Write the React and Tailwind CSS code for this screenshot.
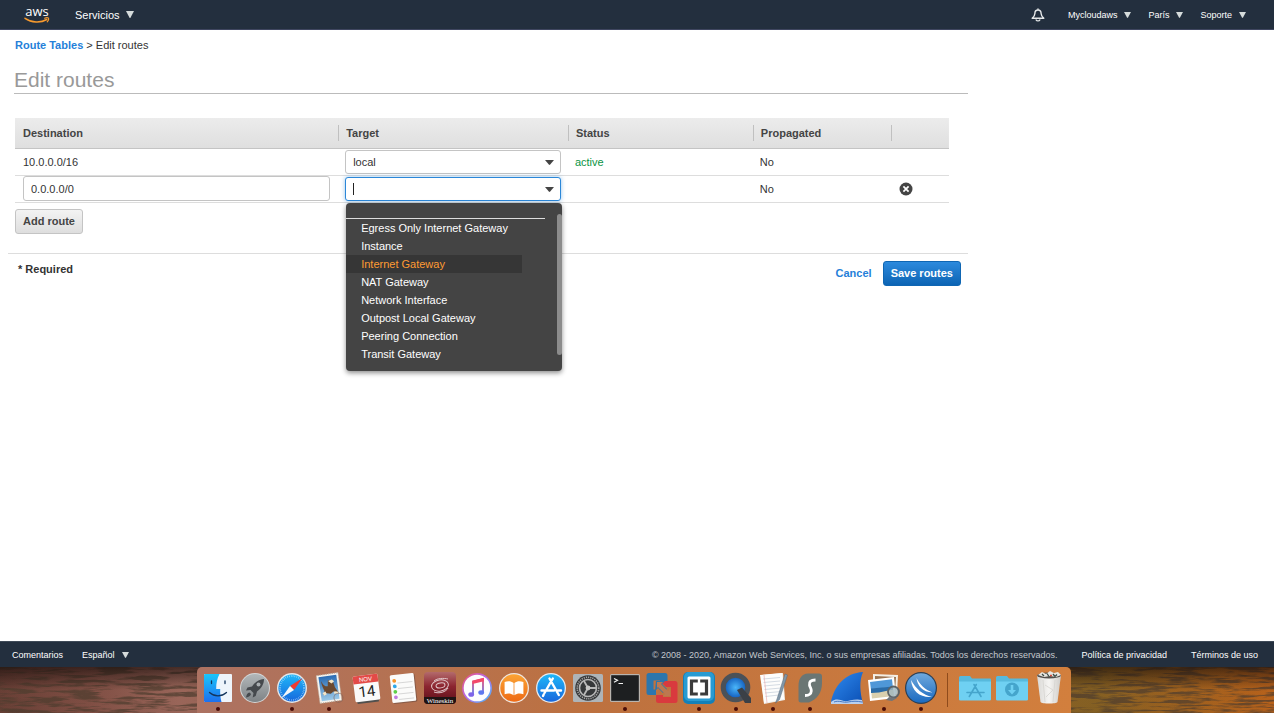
import { useState } from 'react';

const TARGETS = [
  'Egress Only Internet Gateway',
  'Instance',
  'Internet Gateway',
  'NAT Gateway',
  'Network Interface',
  'Outpost Local Gateway',
  'Peering Connection',
  'Transit Gateway',
];

function Caret({ className }) {
  return (
    <svg viewBox="0 0 8 7" preserveAspectRatio="none" className={className} fill="currentColor" aria-hidden="true">
      <path d="M0 0h8L4.6 6.4a.7.7 0 0 1-1.2 0z" />
    </svg>
  );
}

function AwsLogo() {
  return (
    <svg viewBox="0 0 26 18" className="h-[18px] w-[26px] overflow-visible" role="img" aria-label="AWS">
      <text x="13" y="10" textAnchor="middle" fill="#fff" fontFamily="Open Sans, sans-serif" fontWeight="400" fontSize="13">
        aws
      </text>
      <path d="M1 12.300c6.600 4.600 15.600 4.900 21.800 1.200" fill="none" stroke="#f79a2e" strokeWidth="1.500" strokeLinecap="round" />
      <path d="M20.600 12.200c1.600-.6 3.400-.5 3.900 0 .4.600-.2 2.400-1.300 3.700" fill="none" stroke="#f79a2e" strokeWidth="1.100" strokeLinecap="round" />
    </svg>
  );
}

function NavMenu({ label }) {
  return (
    <button type="button" className="flex items-center gap-[7px] text-[9px] text-white">
      {label}
      <Caret className="mt-px h-[6px] w-[7px] text-[#d5dbdb]" />
    </button>
  );
}

function Header() {
  return (
    <header className="flex h-[30px] items-center justify-between border-b border-[#3f4660] bg-[#232f3e] pr-7 pl-6">
      <div className="flex items-center gap-[25px]">
        <a href="#home">
          <AwsLogo />
        </a>
        <button type="button" className="flex items-center gap-[6px] text-[11px] text-white">
          Servicios
          <Caret className="h-[7px] w-2 text-[#d5dbdb]" />
        </button>
      </div>
      <div className="flex items-center gap-[17px]">
        <button type="button" aria-label="Notificaciones" className="mr-[6px]">
          <svg viewBox="0 0 14 14" className="h-[14px] w-[14px]" fill="none" stroke="#e6e9ea" strokeWidth="1.400" strokeLinejoin="round" strokeLinecap="round">
            <path d="M7 1v1M7 2C4.800 2 3.900 3.600 3.900 5.400 3.900 7.400 3 8.500 1.200 10.200h11.600C11 8.500 10.100 7.400 10.100 5.400 10.100 3.600 9.200 2 7 2zM5.200 12c.6 1.200 3 1.200 3.600 0" />
          </svg>
        </button>
        <NavMenu label="Mycloudaws" />
        <NavMenu label="París" />
        <NavMenu label="Soporte" />
      </div>
    </header>
  );
}

function HeadCell({ children, first }) {
  return (
    <th scope="col" className="border-b border-[#c4c4c4] p-0 text-left font-bold text-[#444]">
      <div className={first ? 'h-4 pl-2 leading-4' : 'h-4 border-l border-[#c0c0c0] pl-[7px] leading-4'}>
        {children}
      </div>
    </th>
  );
}

function TargetMenu({ selected, onSelect }) {
  return (
    <div className="absolute top-[26px] right-[-1px] left-[1px] z-10 h-[168px] overflow-hidden rounded-[4px] bg-[#444] pt-[15px] shadow-[0_2px_5px_rgba(0,0,0,0.45)]">
      <ul role="listbox" aria-label="Target" className="mr-[17px] border-t border-[#ddd]">
        {TARGETS.map((name) => (
          <li
            key={name}
            role="option"
            aria-selected={name === selected}
            onClick={() => onSelect(name)}
            className={
              name === selected
                ? 'mr-[23px] h-[18px] cursor-pointer bg-[#363636] pl-[15px] leading-[18px] text-[#ff9b33]'
                : 'mr-[23px] h-[18px] cursor-pointer pl-[15px] leading-[18px] text-white'
            }
          >
            {name}
          </li>
        ))}
      </ul>
      <div className="absolute top-[11px] right-0 h-[141px] w-[5px] rounded-full bg-[#8c8c8c]" />
    </div>
  );
}

function RoutesTable() {
  const [highlighted, setHighlighted] = useState('Internet Gateway');

  return (
    <table className="w-full table-fixed border-collapse">
      <colgroup>
        <col className="w-[34.6%]" />
        <col className="w-[24.6%]" />
        <col className="w-[19.8%]" />
        <col className="w-[14.8%]" />
        <col />
      </colgroup>
      <thead>
        <tr className="h-[30px] bg-linear-to-b from-[#ececec] to-[#dfdfdf]">
          <HeadCell first>Destination</HeadCell>
          <HeadCell>Target</HeadCell>
          <HeadCell>Status</HeadCell>
          <HeadCell>Propagated</HeadCell>
          <HeadCell />
        </tr>
      </thead>
      <tbody>
        <tr className="h-[27px] border-b border-[#ddd]">
          <td className="px-2 py-0">10.0.0.0/16</td>
          <td className="px-[7px] py-0">
            <div className="relative">
              <select
                aria-label="Target for 10.0.0.0/16"
                className="block h-6 w-full appearance-none rounded-[3px] border border-[#c4c4c4] bg-white px-[7px] text-[11px]"
              >
                <option>local</option>
              </select>
              <Caret className="pointer-events-none absolute top-[10px] right-[7px] h-[5px] w-[9px] text-[#444]" />
            </div>
          </td>
          <td className="px-[7px] py-0 text-[#0b9444]">active</td>
          <td className="px-[7px] py-0">No</td>
          <td />
        </tr>
        <tr className="h-[27px] border-b border-[#ddd]">
          <td className="px-2 py-0">
            <input
              aria-label="Destination"
              defaultValue="0.0.0.0/0"
              className="block h-[25px] w-full rounded-[3px] border border-[#c4c4c4] bg-white px-[7px] text-[11px]"
            />
          </td>
          <td className="px-[7px] py-0">
            <div className="relative">
              <input
                role="combobox"
                aria-label="Target"
                aria-expanded="true"
                className="block h-6 w-full rounded-[3px] border border-[#2b87d8] bg-white px-[7px] text-[11px] shadow-[0_0_4px_rgba(43,135,216,0.5)] outline-none"
              />
              <span className="pointer-events-none absolute top-[6px] left-2 h-3 w-px bg-[#222]" />
              <Caret className="pointer-events-none absolute top-[10px] right-[7px] h-[5px] w-[9px] text-[#444]" />
              <TargetMenu selected={highlighted} onSelect={setHighlighted} />
            </div>
          </td>
          <td />
          <td className="px-[7px] py-0">No</td>
          <td className="px-2 py-0">
            <button type="button" aria-label="Remove route" className="block">
              <svg viewBox="0 0 14 14" className="h-[14px] w-[14px]">
                <circle cx="7" cy="7" r="6.500" fill="#444" />
                <path d="M4.400 4.400l5.200 5.200M9.600 4.400L4.400 9.600" stroke="#fff" strokeWidth="1.700" />
              </svg>
            </button>
          </td>
        </tr>
      </tbody>
    </table>
  );
}

function Footer() {
  return (
    <footer className="flex h-[26px] items-center justify-between border-t border-[#3f4a57] bg-[#232f3e] pr-4 pl-3 text-[9px] text-white">
      <div className="flex items-center gap-[19px]">
        <a href="#feedback">Comentarios</a>
        <NavMenu label="Español" />
      </div>
      <div className="flex items-center gap-6">
        <span className="text-[#c3c8cd]">
          © 2008 - 2020, Amazon Web Services, Inc. o sus empresas afiliadas. Todos los derechos reservados.
        </span>
        <a href="#privacy">Política de privacidad</a>
        <a href="#terms">Términos de uso</a>
      </div>
    </footer>
  );
}

// Dock icons, each drawn on a 32x32 grid
const DOCK_APPS = [
  {
    name: 'Finder',
    running: true,
    art: (
      <>
        <rect x="2" y="2" width="28" height="28" rx="1" fill="#eef4fb" />
        <path d="M2 3a1 1 0 0 1 1-1h14.500c-2.500 5-3.300 9-3.300 15h4c-.2 5 .2 9 1.300 13H3a1 1 0 0 1-1-1z" fill="url(#finder)" />
        <path d="M9.500 9v2.500M23 9v2.500M7.500 20.500c5 4.500 12 4.500 17 0" stroke="#14355c" strokeWidth="1.300" fill="none" strokeLinecap="round" />
      </>
    ),
  },
  {
    name: 'Launchpad',
    art: (
      <>
        <circle cx="16" cy="16" r="15" fill="#d4d7d8" />
        <circle cx="16" cy="16" r="14" fill="url(#silver)" />
        <path d="M25 7c-5 .3-9 3-12 7.500l-4.500 1-1.500 3 4.500-.5 3 3-.8 4.500 3-1.500 1.300-4.500C22.500 16.500 25 12 25 7z" fill="#45494d" />
        <circle cx="19.500" cy="12.500" r="2" fill="#a8adb0" />
        <path d="M10.500 20.500c-2 .5-3 2-3.500 5 3-.5 4.500-1.500 5-3.500z" fill="#45494d" />
      </>
    ),
  },
  {
    name: 'Safari',
    running: true,
    art: (
      <>
        <circle cx="16" cy="16" r="15" fill="#e4e7ea" />
        <circle cx="16" cy="16" r="13.600" fill="url(#blue)" />
        <circle cx="16" cy="16" r="12" fill="none" stroke="#cdeafd" strokeWidth="1.600" strokeDasharray=".5 1.400" />
        <path d="M26.500 6L14 14l4 4z" fill="#f03a32" />
        <path d="M5.500 26L14 14l4 4z" fill="#f5f7f9" />
      </>
    ),
  },
  {
    name: 'Mail',
    running: true,
    art: (
      <g transform="rotate(-8 16 16)">
        <rect x="5" y="2" width="22" height="28" fill="#f5f3ee" />
        <rect x="5" y="2" width="22" height="28" fill="none" stroke="#b9a898" strokeWidth="1" strokeDasharray="1 1" />
        <rect x="7" y="4" width="18" height="24" fill="url(#sky)" />
        <path d="M9 8c2 5 3 6 6 6l1-6 5 3 1 5 3 6-5-2-3 2-4-1-4 1c2-2 2-3 2-4-1-3-2-6-2-10z" fill="#6b4930" />
        <path d="M16 9l4-1 2 2-3 2zM9 20l3-1 1 3-3 1zM21 20l4 1-1 2-4-1z" fill="#f4e6c8" />
        <circle cx="24" cy="27" r="4.500" fill="none" stroke="#7e6158" strokeOpacity=".6" />
      </g>
    ),
  },
  {
    name: 'Calendar',
    art: (
      <g transform="rotate(-7 16 16)">
        <path d="M5 28h23l-1 3H6z" fill="#51504e" />
        <rect x="4" y="3" width="25" height="26" rx="1.500" fill="#fafafa" />
        <path d="M4 11V4.500A1.500 1.500 0 0 1 5.500 3h22A1.500 1.500 0 0 1 29 4.500V11z" fill="#e34a47" />
        <text x="16.500" y="9.300" textAnchor="middle" fontSize="6" fill="#fff" fontFamily="Liberation Sans, sans-serif">NOV</text>
        <text x="16.500" y="24.500" textAnchor="middle" fontSize="15" fill="#222" fontFamily="Roboto, sans-serif">14</text>
      </g>
    ),
  },
  {
    name: 'Reminders',
    art: (
      <g transform="rotate(-6 16 16)">
        <rect x="5" y="3" width="24" height="28" rx="1.500" fill="#5b4640" fillOpacity=".5" />
        <rect x="4" y="2" width="24" height="28" rx="1.500" fill="#fbfbfa" />
        <path d="M11 10.500h15M11 16h15M11 21.500h15M11 27h15" stroke="#cfcfcf" strokeWidth=".8" />
        <circle cx="8" cy="8" r="1.900" fill="#f8942c" />
        <circle cx="8" cy="13.500" r="1.900" fill="#2ea7ea" />
        <circle cx="8" cy="19" r="1.900" fill="#5fcf4a" />
        <circle cx="8" cy="24.500" r="1.900" fill="#c07be0" />
      </g>
    ),
  },
  {
    name: 'Wineskin app',
    art: (
      <>
        <rect x="0" y="0" width="32" height="32" rx="4" fill="url(#wine)" />
        <path d="M0 25h32v3a4 4 0 0 1-4 4H4a4 4 0 0 1-4-4z" fill="#1f1414" />
        <ellipse cx="16" cy="13.500" rx="8.500" ry="5.500" fill="none" stroke="#e0c5c8" strokeWidth="1" transform="rotate(-10 16 13.500)" />
        <ellipse cx="16.500" cy="13.500" rx="4.500" ry="2.500" fill="none" stroke="#e0c5c8" strokeWidth="1" transform="rotate(-10 16 13.500)" />
        <path d="M24 7c-4-1-11-1-14 2M10 20c5 2 12 0 14-4" fill="none" stroke="#e0c5c8" strokeWidth="1" />
        <text x="16" y="30.500" textAnchor="middle" fontSize="7" fill="#fff" fontFamily="Liberation Serif, serif">Wineskin</text>
      </>
    ),
  },
  {
    name: 'iTunes',
    art: (
      <>
        <circle cx="16" cy="16" r="15" fill="url(#rainbow)" />
        <circle cx="16" cy="16" r="13.300" fill="#fdfdfe" />
        <path d="M12 22V9.500l10-2.500v13" fill="none" stroke="url(#note)" strokeWidth="1.800" />
        <path d="M11.500 8.800L22.800 6v3.300l-11.300 2.800z" fill="#f3486b" />
        <ellipse cx="10.200" cy="22.500" rx="2.900" ry="2.300" fill="#7e63e8" />
        <ellipse cx="20.200" cy="20.500" rx="2.900" ry="2.300" fill="#5e78ef" />
      </>
    ),
  },
  {
    name: 'Books',
    art: (
      <>
        <circle cx="16" cy="16" r="15" fill="#efe8e2" />
        <circle cx="16" cy="16" r="13.700" fill="url(#orange)" />
        <path d="M15.600 11c-2.500-2-5.600-2.200-9-1v12.200c3.400-1 6.500-.8 9 1zM16.400 11c2.500-2 5.600-2.200 9-1v12.200c-3.400-1-6.500-.8-9 1z" fill="#fff" />
      </>
    ),
  },
  {
    name: 'App Store',
    art: (
      <>
        <circle cx="16" cy="16" r="15" fill="#e6ebf0" />
        <circle cx="16" cy="16" r="13.700" fill="url(#blue)" />
        <path d="M14.500 6.500L23.800 23M17.800 6.500L9.500 21M6.500 18.500h12.500M22.500 18.500H26M8.700 22.500L8 24" stroke="#fff" strokeWidth="2.400" strokeLinecap="round" />
      </>
    ),
  },
  {
    name: 'System Preferences',
    art: (
      <>
        <rect x="1" y="2" width="30" height="28" rx="1.500" fill="#aeb4b8" />
        <circle cx="16" cy="16" r="12.800" fill="#36383a" />
        <circle cx="16" cy="16" r="10.800" fill="none" stroke="#a5a5a5" strokeWidth="1.600" strokeDasharray="1.200 1" />
        <circle cx="16" cy="16" r="8.500" fill="#36383a" stroke="#b8b8b8" strokeWidth="1.600" />
        <path d="M16 16h8M16 16l-4-7M16 16l-4 7" stroke="#b8b8b8" strokeWidth="1.800" />
        <circle cx="16" cy="16" r="2.400" fill="#c5c5c5" />
      </>
    ),
  },
  {
    name: 'Terminal',
    running: true,
    art: (
      <>
        <rect x="1" y="2" width="30" height="28" rx="1.500" fill="#b9b4ae" />
        <rect x="2.200" y="3.200" width="27.600" height="25.600" fill="#1d1f21" />
        <path d="M5 6.500l3.500 1.800L5 10.200M9.500 11.500H14" fill="none" stroke="#f2f2f2" strokeWidth="1.200" />
      </>
    ),
  },
  {
    name: 'VMware Fusion',
    art: (
      <>
        <path d="M3 1h16a2.500 2.500 0 0 1 2.500 2.500V9H14v-.5H7.500v9H10V23H3a2.500 2.500 0 0 1-2.500-2.500v-17A2.500 2.500 0 0 1 3 1z" fill="#2d76ad" />
        <path d="M14 9h15a2.500 2.500 0 0 1 2.500 2.500v17A2.500 2.500 0 0 1 29 31H12.500a2.500 2.500 0 0 1-2.500-2.500V23h7v2h8V15h-5z" fill="#d93a3e" />
        <path d="M10 9h9l-3 3 5 5-4 4-5-5-3 3z" fill="#2d76ad" />
        <path d="M11 10h6l-2 2 7 7 2-2v7h-7l2-2-7-7-1 1z" fill="#bd7850" />
      </>
    ),
  },
  {
    name: 'Brackets',
    running: true,
    art: (
      <>
        <rect x="0" y="0" width="32" height="32" rx="5" fill="#1580b8" />
        <rect x="1" y="0" width="30" height="29" rx="5" fill="#299bd2" />
        <rect x="4.500" y="4.500" width="23" height="22" rx="1.500" fill="#fff" />
        <path d="M14.800 9H8.500v13h6.300M17.200 9h6.300v13h-6.300" fill="none" stroke="#3b3b3b" strokeWidth="3.200" />
      </>
    ),
  },
  {
    name: 'QuickTime Player',
    running: true,
    art: (
      <>
        <circle cx="15.500" cy="15.500" r="12.300" fill="url(#quick)" stroke="#4b5158" strokeWidth="5" />
        <path d="M17 18l5-2.500L31 26v5h-6z" fill="#3b4046" />
      </>
    ),
  },
  {
    name: 'TextEdit',
    running: true,
    art: (
      <>
        <path d="M4 3l22-2 2 27-21 4z" fill="#efeeea" />
        <path d="M3 3l22-2 2 26-20 4z" fill="#fdfdfc" />
        <path d="M6 7l17-1.500M6.500 10.500L23 9M7 14l16-1.500M7.500 17.500L24 16M8 21l16-1.500M8.500 24.500L22 23" stroke="#c9d2dc" strokeWidth=".8" />
        <path d="M7 3l3 28" stroke="#eaa6a6" strokeWidth=".6" />
        <path d="M28 2l-8 25-1.500 4 4-3.500L30.500 3z" fill="#8297a8" stroke="#566a7c" strokeWidth=".5" />
      </>
    ),
  },
  {
    name: 'Surfshark',
    running: true,
    art: (
      <>
        <path d="M14 1.500h11a3 3 0 0 1 3 3V11c0 10-5 16-13 19.500H7a2.500 2.500 0 0 1-2.500-2.500V14C4.500 6 8 2 14 1.500z" fill="#6b7674" />
        <path d="M21.500 8c-5 0-6.500 2-6 5 .4 2.500 2 3.500 1.800 6-.2 3-2 4.500-6.300 4.500" fill="none" stroke="#fff" strokeWidth="2.800" />
      </>
    ),
  },
  {
    name: 'Wireshark',
    art: (
      <>
        <path d="M0 30C3 14 14 1 32 0c-4 9-3 20 0 32z" fill="url(#fin)" />
        <path d="M0 30c5-4 9-2 13-1s10-3 18-1l1 4H0z" fill="#b9d0f0" />
        <path d="M3 30c5-2 9 1 14 0s9-1 14 0" fill="none" stroke="#3b6fc0" strokeWidth=".9" />
      </>
    ),
  },
  {
    name: 'Preview',
    running: true,
    art: (
      <>
        <path d="M5 2l25 1-1 19-24-1z" fill="#f4efe6" />
        <path d="M7 4l21 1-1 15-20-1z" fill="#9b7350" />
        <path d="M0 8l26-3 2 21-26 3z" fill="#fff" />
        <path d="M2 10l22-2.700 1 9-22 2z" fill="#4f97d8" />
        <path d="M3 17l22-2 1 9-22 2.500z" fill="#d9cfae" />
        <path d="M3 16.500l22-2v3l-14 3-8 .5z" fill="#2a6ba8" />
        <circle cx="25.500" cy="20" r="5.500" fill="#9fb6bf" fillOpacity=".8" stroke="#5c6266" strokeWidth="1.800" />
        <path d="M21 25l-3 3 6 1 5-3z" fill="#70757a" />
      </>
    ),
  },
  {
    name: 'JDownloader',
    running: true,
    art: (
      <>
        <circle cx="16" cy="16" r="16" fill="#2b3f55" />
        <circle cx="16" cy="16" r="14.800" fill="url(#jblue)" />
        <path d="M6 8c1 11 9 18 21 17-9-2-16-8-21-17z" fill="#fff" />
        <path d="M11.500 6c1 8 6 14 16 14.500C20 17.500 15 13 11.500 6z" fill="#fff" />
      </>
    ),
  },
];

const DOCK_PLACES = [
  {
    name: 'Applications',
    art: (
      <>
        <path d="M0 5.500A1.500 1.500 0 0 1 1.500 4H11l2 2.500h18a1 1 0 0 1 1 1V28H0z" fill="#57b9dc" />
        <path d="M0 9.500h32V27a1.500 1.500 0 0 1-1.500 1.500h-29A1.500 1.500 0 0 1 0 27z" fill="#6fd0f2" />
        <path d="M15 12.500l7 12M17.300 12.500l-7 12M8 20.500h17" stroke="#45a5cc" strokeWidth="1.600" strokeLinecap="round" />
      </>
    ),
  },
  {
    name: 'Downloads',
    art: (
      <>
        <path d="M0 5.500A1.500 1.500 0 0 1 1.500 4H11l2 2.500h18a1 1 0 0 1 1 1V28H0z" fill="#57b9dc" />
        <path d="M0 9.500h32V27a1.500 1.500 0 0 1-1.500 1.500h-29A1.500 1.500 0 0 1 0 27z" fill="#6fd0f2" />
        <circle cx="16" cy="17.500" r="7" fill="#45a5cc" />
        <path d="M14.700 13h2.600v5H20l-4 4.500-4-4.500h2.700z" fill="#6fd0f2" />
      </>
    ),
  },
  {
    name: 'Trash',
    art: (
      <>
        <path d="M4 3h24l-3.500 27c-1 2-16 2-17 0z" fill="url(#bin)" />
        <path d="M10 8l2 22M22 8l-2 22M12 13l8 5-7 7" stroke="#d6d4d0" strokeWidth=".8" fill="none" />
        <ellipse cx="16" cy="3.500" rx="12" ry="3" fill="#55504c" />
        <path d="M5 3l4-3 4 2 4-3 4 2 4-1 3 3-5 2-6-1-6 1z" fill="#e8e6e1" />
        <path d="M9 2l2 2M14 1.500l2 3M20 2l2 2.500M24 2.500l-2 2" stroke="#3d4b45" strokeWidth="1.300" />
        <path d="M17 3.500h2" stroke="#d24b3c" strokeWidth="1.300" />
      </>
    ),
  },
];

function IconGradients() {
  return (
    <svg className="absolute h-0 w-0" aria-hidden="true">
      <defs>
        <linearGradient id="finder" x2="0" y2="1"><stop stopColor="#1bc6fb" /><stop offset="1" stopColor="#1e70ee" /></linearGradient>
        <linearGradient id="silver" x2="0" y2="1"><stop stopColor="#b2b7b9" /><stop offset="1" stopColor="#7e8386" /></linearGradient>
        <linearGradient id="blue" x2="0" y2="1"><stop stopColor="#1fb7f8" /><stop offset="1" stopColor="#1768dd" /></linearGradient>
        <linearGradient id="sky" x2="0" y2="1"><stop stopColor="#2a6cb4" /><stop offset="1" stopColor="#9bc9e8" /></linearGradient>
        <linearGradient id="wine" x2="0" y2="1"><stop stopColor="#b36a6c" /><stop offset=".45" stopColor="#8c2530" /><stop offset="1" stopColor="#5a0d17" /></linearGradient>
        <linearGradient id="rainbow" x2="1" y2="1"><stop stopColor="#f0506e" /><stop offset=".5" stopColor="#b26af0" /><stop offset="1" stopColor="#3fc4f5" /></linearGradient>
        <linearGradient id="note" x2="0" y2="1"><stop stopColor="#f3486b" /><stop offset="1" stopColor="#5e78ef" /></linearGradient>
        <linearGradient id="orange" x2="0" y2="1"><stop stopColor="#fba435" /><stop offset="1" stopColor="#ee6a15" /></linearGradient>
        <radialGradient id="quick"><stop stopColor="#4ab6fa" /><stop offset="1" stopColor="#0a50b4" /></radialGradient>
        <linearGradient id="fin" x2="1" y2="1"><stop stopColor="#2f8bf0" /><stop offset="1" stopColor="#0b4fb4" /></linearGradient>
        <linearGradient id="jblue" x2="0" y2="1"><stop stopColor="#6fa9dd" /><stop offset="1" stopColor="#1b6ac0" /></linearGradient>
        <linearGradient id="bin" x2="1" y2="0"><stop stopColor="#d9d8d5" /><stop offset=".5" stopColor="#f6f5f3" /><stop offset="1" stopColor="#cfccc8" /></linearGradient>
      </defs>
    </svg>
  );
}

function DockItem({ app }) {
  return (
    <button type="button" aria-label={app.name} className="flex w-[37px] flex-col items-center pt-[5px]">
      <svg viewBox="0 0 32 32" className="h-8 w-8 overflow-visible" aria-hidden="true">
        {app.art}
      </svg>
      {app.running && <span className="mt-[3px] h-1 w-1 rounded-full bg-[#4a0d08]" />}
    </button>
  );
}

// Streaky bark texture behind the dock
function Wallpaper() {
  return (
    <svg className="absolute inset-0 h-full w-full" aria-hidden="true">
      <defs>
        <linearGradient id="ground">
          <stop stopColor="#6d4238" />
          <stop offset=".07" stopColor="#855247" />
          <stop offset=".14" stopColor="#a06a5d" />
          <stop offset=".5" stopColor="#a86a3c" />
          <stop offset=".86" stopColor="#8a6424" />
          <stop offset="1" stopColor="#c0661c" />
        </linearGradient>
        <linearGradient id="shade" x2="0" y2="1">
          <stop stopColor="#140a08" stopOpacity=".65" />
          <stop offset=".5" stopColor="#140a08" stopOpacity=".05" />
        </linearGradient>
        <filter id="streaks" x="0" y="0" width="100%" height="100%">
          <feTurbulence type="fractalNoise" baseFrequency="0.03 0.3" numOctaves="4" seed="4" />
          <feColorMatrix values="0 0 0 0 .08  0 0 0 0 .05  0 0 0 0 .03  5 0 0 0 -2.2" />
        </filter>
      </defs>
      <rect width="100%" height="100%" fill="url(#ground)" />
      <rect width="100%" height="100%" filter="url(#streaks)" opacity=".7" />
      <rect width="100%" height="100%" fill="url(#shade)" />
    </svg>
  );
}

function Dock() {
  return (
    <div className="relative flex h-[46px] justify-center overflow-hidden">
      <Wallpaper />
      <IconGradients />
      <div className="relative mr-[6px] flex rounded-t-[5px] bg-linear-to-r from-[#ac7262] via-[#bd713f] via-45% to-[#d27f3d] pr-1 pl-[2px]">
        {DOCK_APPS.map((app) => (
          <DockItem key={app.name} app={app} />
        ))}
        <div className="mx-2 mt-[6px] h-[34px] w-px bg-[#8f4b1c]" />
        {DOCK_PLACES.map((app) => (
          <DockItem key={app.name} app={app} />
        ))}
      </div>
    </div>
  );
}

export default function App() {
  return (
    <div className="flex min-h-screen flex-col bg-white font-['Liberation_Sans',Arial,sans-serif] text-[11px] leading-4 text-[#333]">
      <Header />
      <main className="w-full max-w-[968px] flex-1 pt-[7px]">
        <nav aria-label="Breadcrumb" className="px-[15px]">
          <a href="#route-tables" className="font-bold text-[#2580d9]">Route Tables</a>
          {' > '}
          <span>Edit routes</span>
        </nav>
        <h1 className="mt-[13px] ml-[14px] border-b border-[#bbb] text-[21px] leading-[27px] text-[#999]">
          Edit routes
        </h1>
        <form onSubmit={(e) => e.preventDefault()}>
          <div className="mt-6 pr-[19px] pl-[15px]">
            <RoutesTable />
            <button
              type="button"
              className="mt-[6px] h-[25px] rounded-[3px] border border-[#c4c4c4] bg-linear-to-b from-[#f3f3f3] to-[#dedede] px-[7px] font-bold text-[#444]"
            >
              Add route
            </button>
          </div>
          <div className="mt-[19px] ml-2 flex items-start justify-between border-t border-[#ddd] pt-[7px] pr-[7px] pl-[10px]">
            <p className="font-bold">* Required</p>
            <div className="flex items-center gap-[11px]">
              <a href="#cancel" className="font-bold text-[#2580d9]">Cancel</a>
              <button
                type="submit"
                className="h-[25px] rounded-[3px] border border-[#0f66b3] bg-linear-to-b from-[#2c8add] to-[#0b64b4] px-[7px] font-bold text-white"
              >
                Save routes
              </button>
            </div>
          </div>
        </form>
      </main>
      <Footer />
      <Dock />
    </div>
  );
}
